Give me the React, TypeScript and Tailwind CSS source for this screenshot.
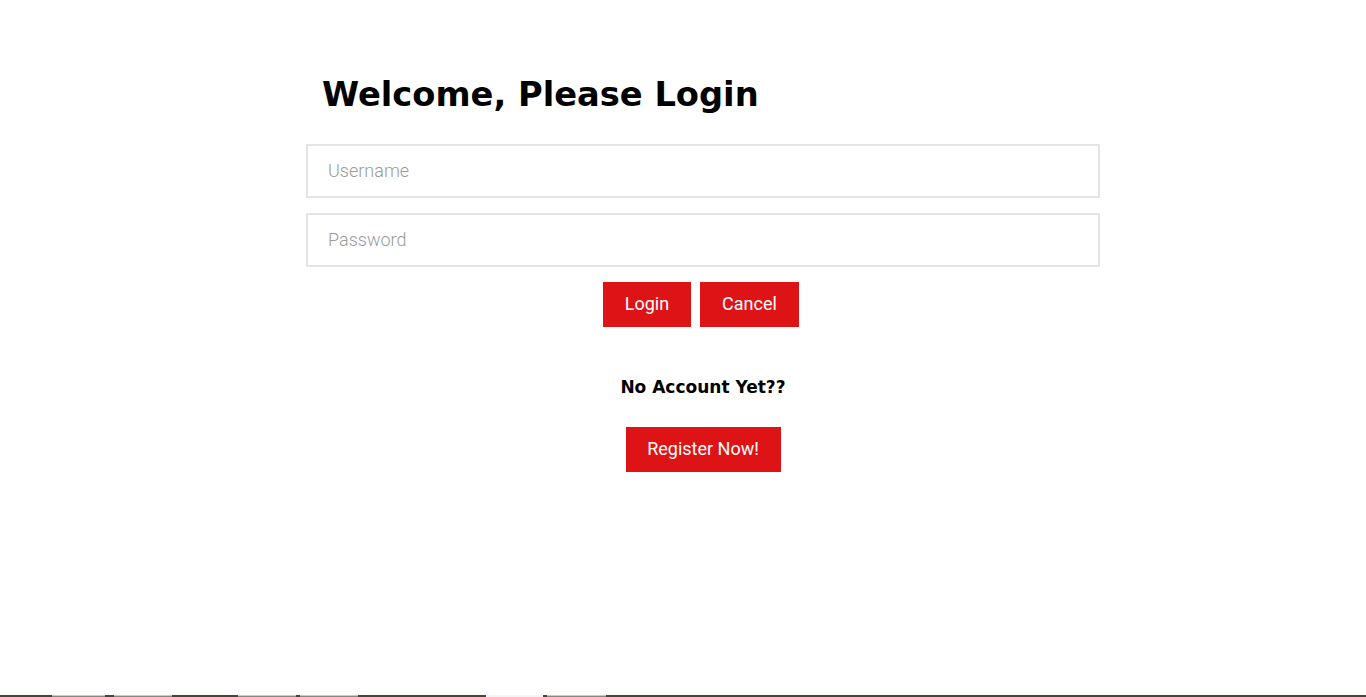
import React from "react";

const footerItems = [
  { x: 52, w: 53, tone: "grey" },
  { x: 114, w: 58, tone: "grey" },
  { x: 238, w: 58, tone: "grey" },
  { x: 300, w: 58, tone: "grey" },
  { x: 486, w: 57, tone: "white" },
  { x: 547, w: 59, tone: "grey" },
];

function FooterEdge() {
  return (
    <div className="relative h-[2px] w-full bg-[#4a4336]">
      {footerItems.map((it, i) => (
        <div
          key={i}
          className={
            it.tone === "white"
              ? "absolute top-0 h-[2px] bg-[#f4f4f4]"
              : "absolute top-0 h-[2px] border-t border-[#cfcac0] bg-[#8c877c]"
          }
          style={{ left: it.x, width: it.w }}
        />
      ))}
    </div>
  );
}

export default function App() {
  const roboto = { fontFamily: "Roboto, 'Liberation Sans', sans-serif" };
  const heading = { fontFamily: "'DejaVu Sans', 'Liberation Sans', sans-serif" };

  return (
    <div className="flex h-[697px] w-[1366px] flex-col overflow-hidden bg-white">
      <main className="flex-1">
        <div className="ml-[306px] w-[794px] pt-[71px]">
          <h1
            className="pl-[16px] text-[33.7px] font-bold leading-[48px] text-black"
            style={heading}
          >
            Welcome, Please Login
          </h1>
          <form className="mt-[25px] flex flex-col gap-[15px]" onSubmit={(e) => e.preventDefault()}>
            <input
              type="text"
              placeholder="Username"
              className="h-[54px] w-full border-2 border-[#e4e4e4] px-[20px] pb-[2px] text-[18px] font-light text-[#555] outline-none placeholder:text-[#9a9a9a]"
              style={roboto}
            />
            <input
              type="password"
              placeholder="Password"
              className="h-[54px] w-full border-2 border-[#e4e4e4] px-[20px] pb-[2px] text-[18px] font-light text-[#555] outline-none placeholder:text-[#9a9a9a]"
              style={roboto}
            />
          </form>
          <div className="mt-[15px] flex justify-center gap-[9px] pr-[4px]" style={roboto}>
            <button className="h-[45px] w-[88px] bg-[#dd1316] pb-[2px] text-[18px] text-white">
              Login
            </button>
            <button className="h-[45px] w-[99px] bg-[#dd1316] pb-[2px] text-[18px] text-white">
              Cancel
            </button>
          </div>
          <p
            className="mt-[48px] text-center text-[17px] font-bold leading-[24px] text-black"
            style={heading}
          >
            No Account Yet??
          </p>
          <div className="mt-[28px] flex justify-center" style={roboto}>
            <button className="h-[45px] w-[155px] bg-[#dd1316] pb-[2px] text-[18px] text-white">
              Register Now!
            </button>
          </div>
        </div>
      </main>
      <FooterEdge />
    </div>
  );
}
